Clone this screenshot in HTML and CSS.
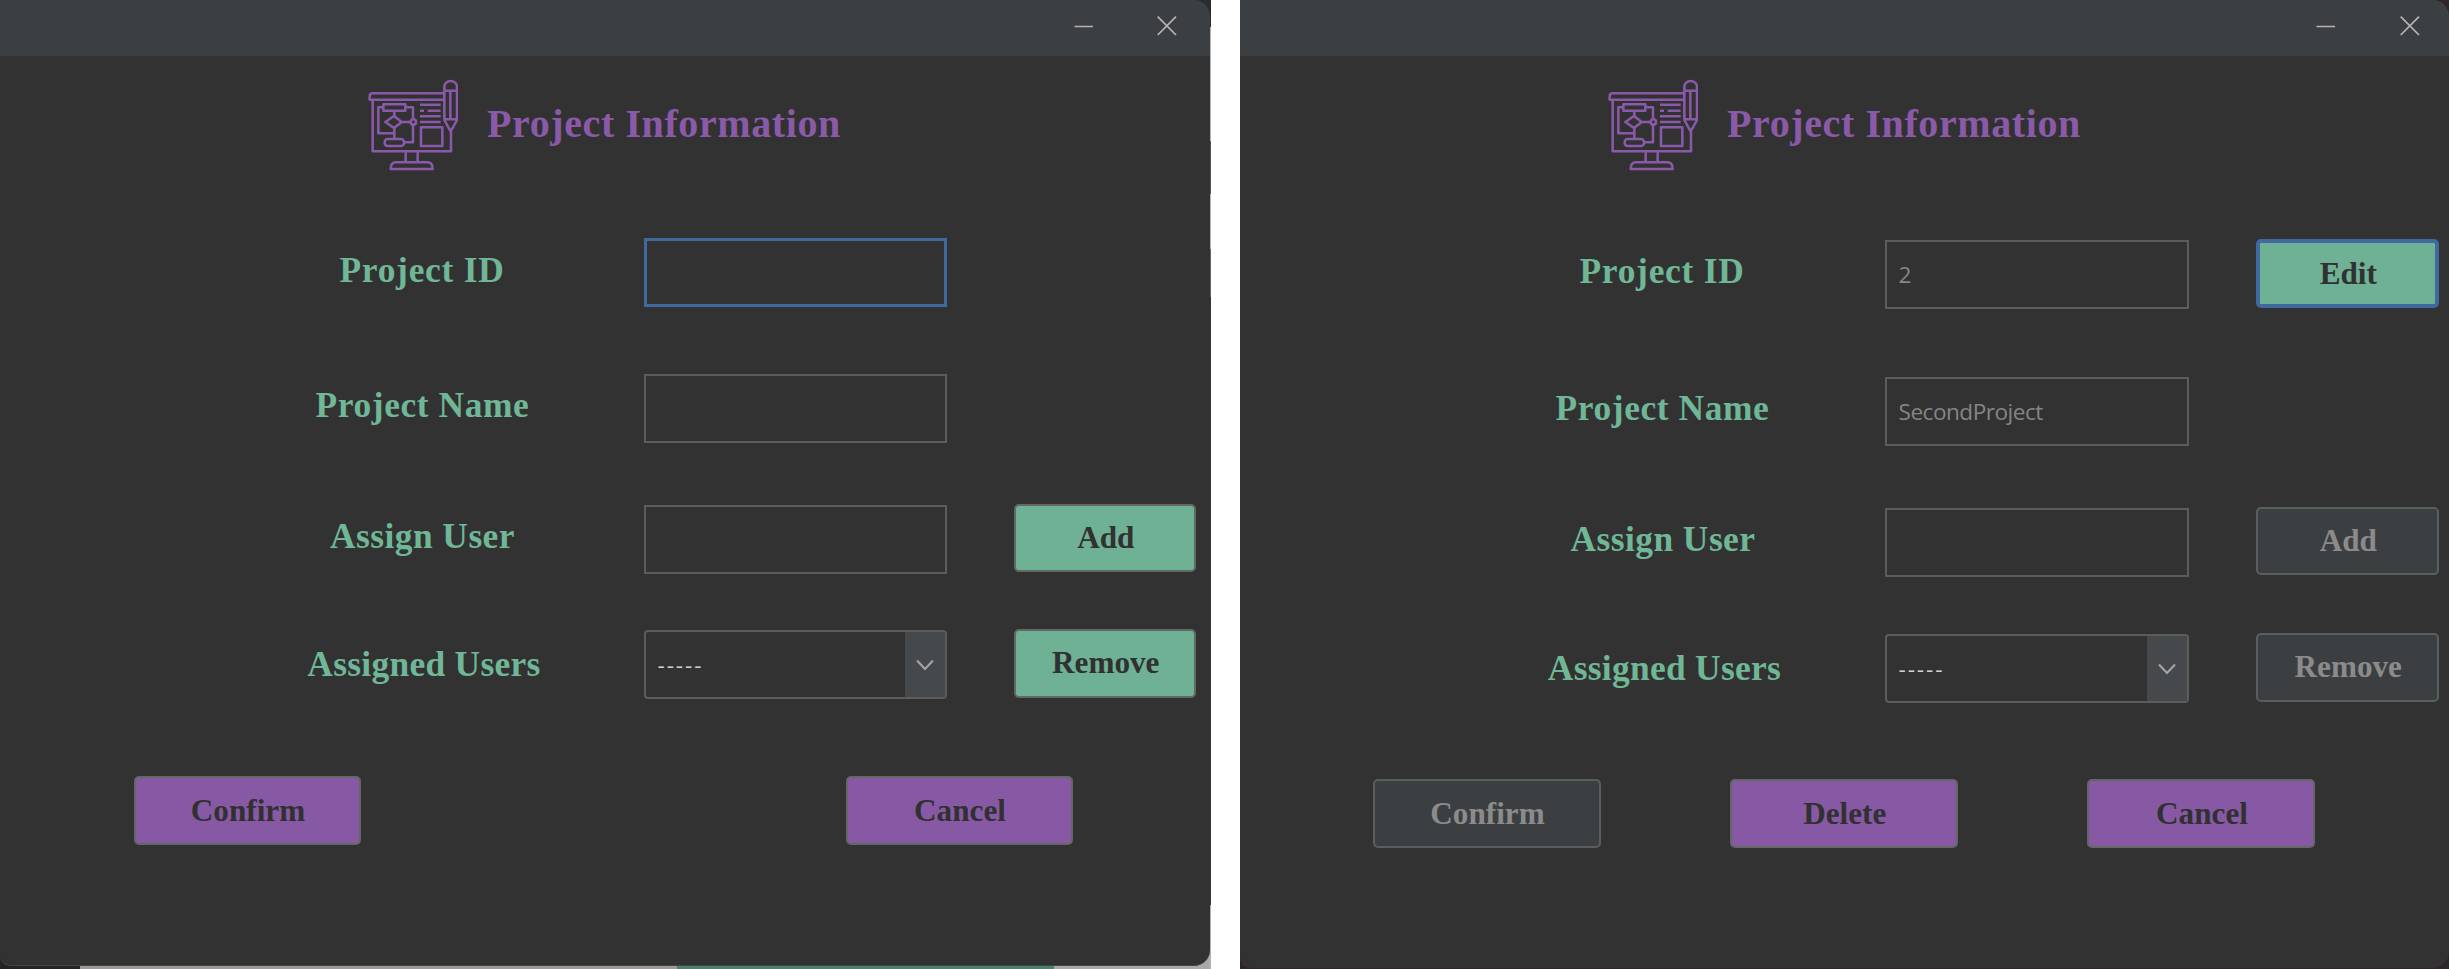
FILE: index.html
```html
<!DOCTYPE html>
<html lang="en">
<head>
<meta charset="utf-8">
<title>Project Information</title>
<link rel="stylesheet" href="styles.css">
</head>
<body>
<svg width="0" height="0" class="defs">
  <symbol id="board" viewBox="54 27 270 276">
    <g fill="none" stroke="currentColor" stroke-width="7.6" stroke-linejoin="round">
      <path d="M283 70H68q-9 0-9 9v10H281"/>
      <path d="M68 90V244H303V184"/>
      <path d="M167 246V277M203 246V277"/>
      <path d="M122 297q0-20 16-20h94q16 0 16 20z"/>
      <path d="M283 150V50a19 17 0 0 1 38 0V150L302 184ZM283 62H321M301 62V148M283 148H321"/>
      <rect x="100" y="103" width="66" height="19"/>
      <path d="M100 112H85V190H133M166 112H189V148M133 122V138M106 156L132 138L155 156L132 174ZM155 156H181M133 174V207M162 217H189V165"/>
      <circle cx="190" cy="156" r="8"/>
      <rect x="104" y="207" width="58" height="21" rx="9"/>
      <path d="M210 104H272M210 122H222M233 122H272M210 139H272M210 156H272"/>
      <rect x="213" y="172" width="64" height="56"/>
    </g>
  </symbol>
</svg>
<main class="screen">
  <div class="desktop desktop-new">
    <section class="window">
      <div class="titlebar">
        <svg class="min" width="20" height="20" viewBox="0 0 20 20"><path d="M.5 10.5H19"/></svg>
        <svg width="20" height="20" viewBox="0 0 20 20"><path d="M.7.7L19 19M19 .7L.7 19"/></svg>
      </div>
      <header class="header"><svg class="logo"><use href="#board"/></svg><h1>Project Information</h1></header>
      <div class="form">
        <label class="l1">Project ID</label><div class="field focus"></div><span></span>
        <label class="l2">Project Name</label><div class="field"></div><span></span>
        <label class="l3">Assign User</label><div class="field"></div><button class="btn green">Add</button>
        <label class="l4">Assigned Users</label><div class="field combo"><span class="value">-----</span><span class="arrow"><svg width="18" height="12" viewBox="0 0 18 12"><path d="M1 1.5L9 10L17 1.5"/></svg></span></div><button class="btn green">Remove</button>
      </div>
      <footer class="actions"><button class="btn purple">Confirm</button><button class="btn purple">Cancel</button></footer>
    </section>
  </div>
  <div class="desktop desktop-edit">
    <section class="window">
      <div class="titlebar">
        <svg class="min" width="20" height="20" viewBox="0 0 20 20"><path d="M.5 10.5H19"/></svg>
        <svg width="20" height="20" viewBox="0 0 20 20"><path d="M.7.7L19 19M19 .7L.7 19"/></svg>
      </div>
      <header class="header"><svg class="logo"><use href="#board"/></svg><h1>Project Information</h1></header>
      <div class="form">
        <label class="l1">Project ID</label><div class="field"><span class="value">2</span></div><button class="btn green focus">Edit</button>
        <label class="l2">Project Name</label><div class="field"><span class="value">SecondProject</span></div><span></span>
        <label class="l3">Assign User</label><div class="field"></div><button class="btn off">Add</button>
        <label class="l4">Assigned Users</label><div class="field combo"><span class="value">-----</span><span class="arrow"><svg width="18" height="12" viewBox="0 0 18 12"><path d="M1 1.5L9 10L17 1.5"/></svg></span></div><button class="btn off">Remove</button>
      </div>
      <footer class="actions"><button class="btn off">Confirm</button><button class="btn purple">Delete</button><button class="btn purple">Cancel</button></footer>
    </section>
  </div>
</main>
</body>
</html>
```
FILE: styles.css
```css
* { box-sizing: border-box; }
body { margin: 0; background: #fff; }
.defs { display: block; }
.screen { display: flex; gap: 29px; width: 2449px; height: 969px; overflow: hidden; }

/* Slivers of the desktop visible round each window */
.desktop { height: 969px; }
.desktop-new {
  width: 1211px;
  padding: 0 1.5px 3px 0;
  background:
    linear-gradient(90deg, #252424 80px, #9c9998 80px 677px, #4c806a 677px 1054px, #a8a8a8 1054px) 0 100% / 1209px 20px no-repeat,
    linear-gradient(#2b2b2b 27px, #b5b5b5 27px 141px, #555 141px 194px, #b5b5b5 194px 249px, #666 249px 297px, #363636 297px 905px, #b0b0b0 905px);
}
.desktop-edit { width: 1209px; padding-bottom: 1px; background: #2c2529; }

.window {
  display: flex; flex-direction: column; height: 100%; overflow: hidden;
  background: #323232; border-radius: 0 16px 16px 10px;
  font-family: "Liberation Serif", "Times New Roman", serif;
}
.desktop-new .window { border-bottom: 1px solid #444; }
.titlebar {
  display: flex; justify-content: flex-end; gap: 63px; flex: none;
  height: 56px; padding: 16px 33px 0 0; background: #3c3f41;
}
.desktop-edit .titlebar { padding-right: 29px; gap: 64px; }
.titlebar svg { fill: none; stroke: #b4b4b4; stroke-width: 1.7; }

.header { display: flex; flex: none; height: 182px; padding: 23px 0 0 368px; color: #8a5aa8; }
.desktop-edit .header { height: 184px; }
.logo { width: 90px; height: 92px; margin-right: 29px; color: #8b59aa; }
h1 { margin: 21px 0 0; font-size: 40px; line-height: 48px; letter-spacing: .6px; white-space: nowrap; }

.form {
  display: grid; flex: none; align-items: start;
  grid-template-columns: 444px 370px 181.5px;
  grid-template-rows: 136px 130.5px 125.5px 146px;
  padding-left: 200px;
}
.desktop-edit .form {
  grid-template-columns: 445px 371px 182.5px;
  grid-template-rows: 137px 130.5px 126.5px 145px;
}
label {
  text-align: center; font-size: 35.4px; font-weight: bold; line-height: 68px;
  letter-spacing: .45px; color: #6fb796; white-space: nowrap;
}
.l1 { line-height: 64px; letter-spacing: .75px; }
.l2 { line-height: 63px; letter-spacing: .6px; padding-left: 1px; }
.l3 { line-height: 63px; padding-left: 1px; }
.l4 { padding-left: 4px; letter-spacing: .3px; }
.desktop-edit .l1 { line-height: 63px; padding-right: 1px; }
.desktop-edit .l2 { padding-left: 0; }

.field { display: flex; align-items: center; width: 303px; height: 69px; border: 2px solid #5b5d5d; }
.desktop-edit .field { width: 304px; }
.field.focus { border: 3px solid #416a9c; }
.value { flex: 1; padding-left: 11.5px; color: #858585; font: 22.6px "Open Sans", "Noto Sans", sans-serif; letter-spacing: -.5px; }
.combo { border-radius: 4px; }
.combo .value { color: #d0d0d0; letter-spacing: 1.9px; }
.arrow { display: flex; align-items: center; justify-content: center; width: 40px; height: 100%; background: #45494b; }
.arrow svg { fill: none; stroke: #a5a5a5; stroke-width: 2; }

.btn {
  height: 69px; padding: 0 0 0 2px; margin: -1px 0 0; border: 2px solid #646766; border-radius: 5px;
  font: bold 31.2px "Liberation Serif", "Times New Roman", serif; color: #313131;
}
.form .btn:not(.focus) { height: 68.5px; }
.green { background: #6eb194; }
.purple { background: #8759a5; }
.off { background: #3c3f41; border-color: #5b5e5f; color: #8b8b8b; }
.btn.focus { border: 4px solid #4069a0; }

.actions { display: flex; justify-content: space-between; padding: 0 137px 0 133.5px; }
.actions .btn { width: 227px; margin-top: 0; }
.desktop-edit .actions { padding: 0 134px 0 132.5px; }
.desktop-edit .actions .btn { width: 228px; }
```
